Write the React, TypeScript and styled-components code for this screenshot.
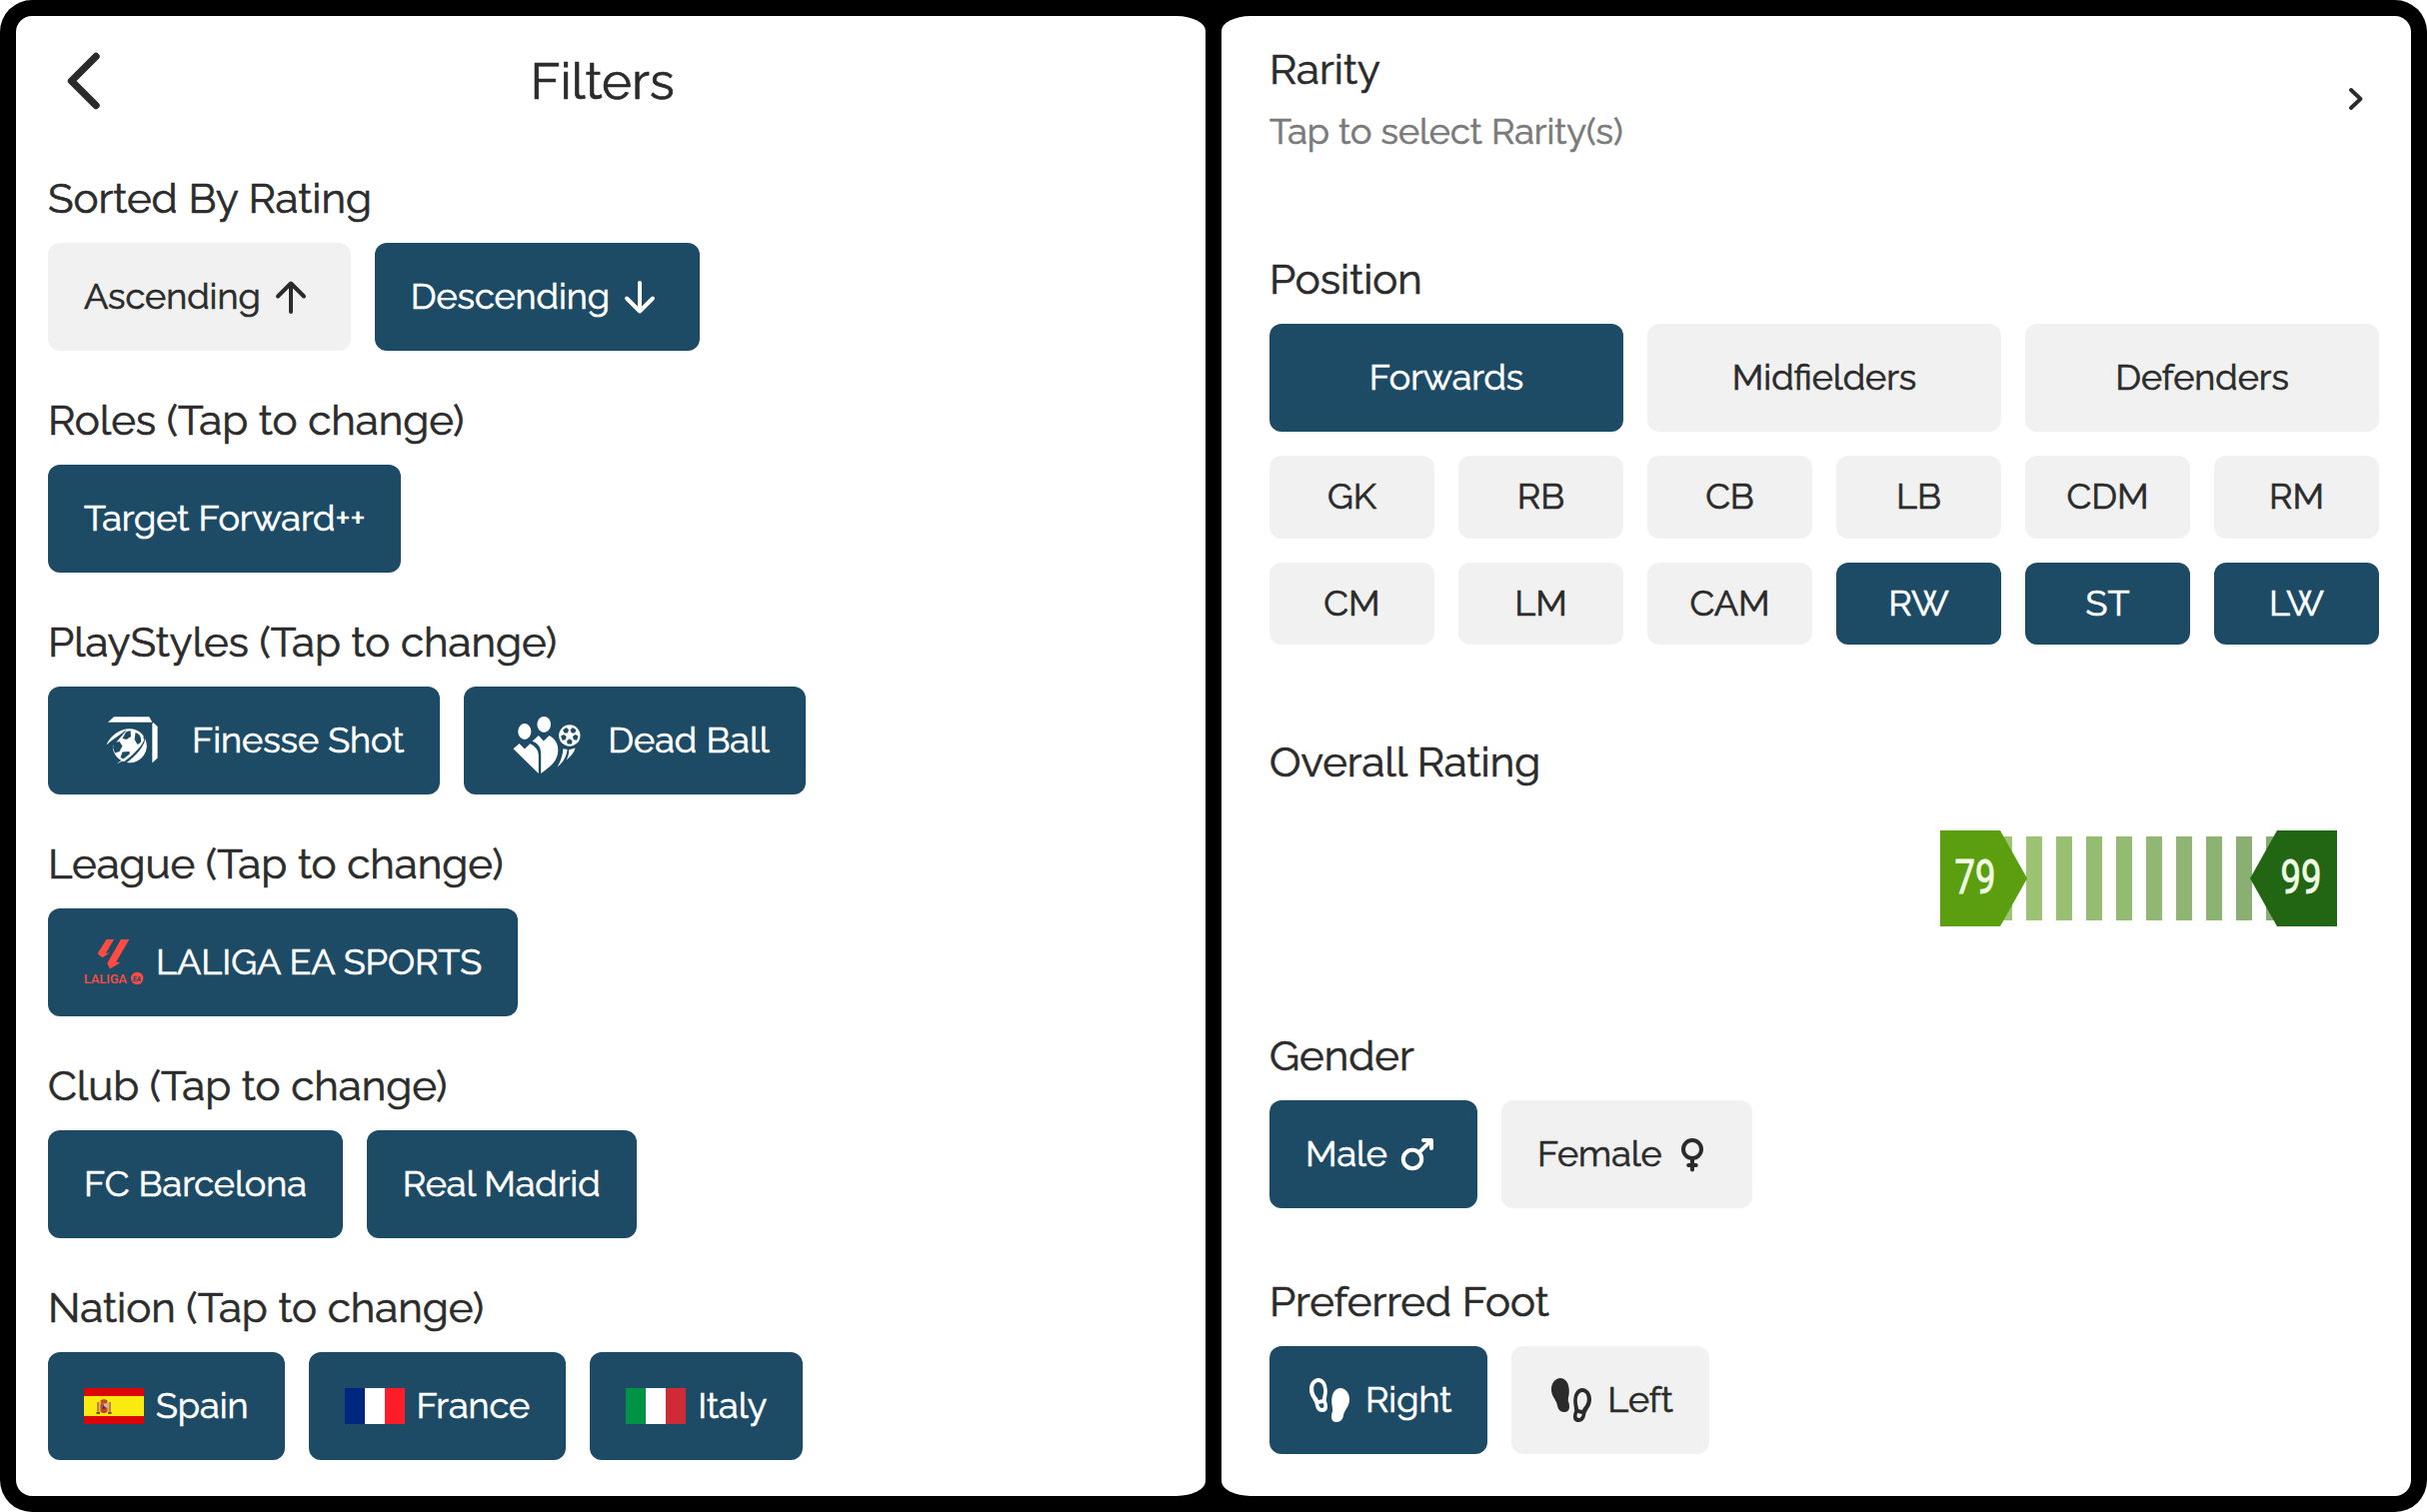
import styled, { createGlobalStyle } from 'styled-components';

const roles = ['Target Forward++'];
const clubs = ['FC Barcelona', 'Real Madrid'];
const lines = ['Forwards', 'Midfielders', 'Defenders'];
const positions = ['GK', 'RB', 'CB', 'LB', 'CDM', 'RM', 'CM', 'LM', 'CAM', 'RW', 'ST', 'LW'];
const selectedPositions = ['RW', 'ST', 'LW'];
const bars = ['#9dc573', '#9bc373', '#98c073', '#95bd72', '#93bb72', '#91b872', '#8eb572', '#8cb372', '#89b072', '#86ae71'];

export default function App(){
    return (
        <>
            <GlobalStyle />
            <Frame>
                <LeftPanel>
                    <Header>
                        <BackIcon />
                        <Title>Filters</Title>
                    </Header>
                    <Section>
                        <Label>Sorted By Rating</Label>
                        <ChipRow>
                            <Chip>Ascending <ArrowIcon /></Chip>
                            <Chip $active>Descending <ArrowIcon down /></Chip>
                        </ChipRow>
                    </Section>
                    <Section>
                        <Label>Roles (Tap to change)</Label>
                        <ChipRow>
                            {roles.map(role => <Chip key={role} $active>{role}</Chip>)}
                        </ChipRow>
                    </Section>
                    <Section>
                        <Label>PlayStyles (Tap to change)</Label>
                        <ChipRow>
                            <Chip $active $gap={12}><FinesseIcon />Finesse Shot</Chip>
                            <Chip $active $gap={12}><DeadBallIcon />Dead Ball</Chip>
                        </ChipRow>
                    </Section>
                    <Section>
                        <Label>League (Tap to change)</Label>
                        <ChipRow>
                            <Chip $active $gap={12}><LaligaLogo />LALIGA EA SPORTS</Chip>
                        </ChipRow>
                    </Section>
                    <Section>
                        <Label>Club (Tap to change)</Label>
                        <ChipRow>
                            {clubs.map(club => <Chip key={club} $active>{club}</Chip>)}
                        </ChipRow>
                    </Section>
                    <Section>
                        <Label>Nation (Tap to change)</Label>
                        <ChipRow>
                            <Chip $active $gap={12}><SpainFlag />Spain</Chip>
                            <Chip $active $gap={12}><Flag $from='#00267f' $to='#ff1c29' />France</Chip>
                            <Chip $active $gap={12}><Flag $from='#009246' $to='#ce2b37' />Italy</Chip>
                        </ChipRow>
                    </Section>
                </LeftPanel>

                <RightPanel>
                    <RarityRow>
                        <div>
                            <Label $space={16}>Rarity</Label>
                            <Hint>Tap to select Rarity(s)</Hint>
                        </div>
                        <ChevronIcon />
                    </RarityRow>
                    <Section $below={92}>
                        <Label>Position</Label>
                        <LineGrid>
                            {lines.map(line => <Chip key={line} $active={line === 'Forwards'}>{line}</Chip>)}
                        </LineGrid>
                        <PositionGrid>
                            {positions.map(p => (
                                <PositionChip key={p} $active={selectedPositions.includes(p)}>{p}</PositionChip>
                            ))}
                        </PositionGrid>
                    </Section>
                    <Section $below={104}>
                        <Label $space={44}>Overall Rating</Label>
                        <RangeSlider>
                            <Bars>
                                {bars.map(color => <Bar key={color} $color={color} />)}
                            </Bars>
                            <MinHandle><RatingValue>79</RatingValue></MinHandle>
                            <MaxHandle><RatingValue>99</RatingValue></MaxHandle>
                        </RangeSlider>
                    </Section>
                    <Section $below={68}>
                        <Label>Gender</Label>
                        <ChipRow>
                            <Chip $active>Male <MaleIcon /></Chip>
                            <Chip>Female <FemaleIcon /></Chip>
                        </ChipRow>
                    </Section>
                    <Section>
                        <Label>Preferred Foot</Label>
                        <ChipRow>
                            <Chip $active $gap={12}><FeetIcon foot='right' />Right</Chip>
                            <Chip $gap={12}><FeetIcon foot='left' />Left</Chip>
                        </ChipRow>
                    </Section>
                </RightPanel>
            </Frame>
        </>
    );
}

function BackIcon(){
    return (
        <BackSvg viewBox='0 0 34 58' fill='none' stroke='#2b2b2b' strokeWidth='7.4' strokeLinecap='round' strokeLinejoin='round'>
            <path d='M29 4.5 L4.5 29 L29 53.5' />
        </BackSvg>
    );
}

function ChevronIcon(){
    return (
        <ChevronSvg viewBox='0 0 14 22' fill='none' stroke='#2b2b2b' strokeWidth='3.8' strokeLinecap='round' strokeLinejoin='round'>
            <path d='M2 2 L11.5 11 L2 20' />
        </ChevronSvg>
    );
}

function ArrowIcon({ down }: { down?: boolean }){
    return (
        <Icon viewBox='0 0 48 48' fill='none' stroke='currentColor' strokeWidth='4' strokeLinecap='round' strokeLinejoin='round'>
            {down
                ? <path d='M24 10 V38 M11 25.5 L24 38.5 L37 25.5' />
                : <path d='M24 39 V11 M11 23.5 L24 10.5 L37 23.5' />}
        </Icon>
    );
}

function MaleIcon(){
    return (
        <Icon viewBox='0 0 48 48' fill='none' stroke='currentColor' strokeWidth='4' strokeLinecap='round' strokeLinejoin='round'>
            <circle cx='19' cy='29' r='9.2' />
            <path d='M25.8 22.2 L37.5 10.5 M30 10 H38 V18' />
        </Icon>
    );
}

function FemaleIcon(){
    return (
        <Icon viewBox='0 0 48 48' fill='none' stroke='currentColor' strokeWidth='4' strokeLinecap='round'>
            <circle cx='24' cy='19' r='9' />
            <path d='M24 28 V39.5 M20.2 35 H27.8' />
        </Icon>
    );
}

function FeetIcon({ foot }: { foot: 'left' | 'right' }){
    const sole = 'M9 0 C14 0 17.8 5 17.8 13 C17.8 17.5 16.6 20 16.8 23 C18 25.5 18 27.5 18 29 C18 32 16 34 12.8 34 C8.5 34 6.6 31 6 27.5 C5.4 23.5 3.4 21.5 1.8 18.5 C.6 16.4 0 14 0 11 C0 5 4 0 9 0Z';
    const holes = 'M9 4 C12 4 14.2 8 14.2 12.5 C14.2 16.5 13 19 12.8 21.2 L9 22 C8 19 4.2 17 4.2 11 C4.2 7 6 4 9 4Z M9.2 26 L13.6 25 C15 27 14.6 30 12.6 30 C10.4 30 9.8 28 9.2 26Z';
    return (
        <Icon viewBox='0 0 48 48' fill='currentColor' fillRule='evenodd'>
            <path transform='translate(4 2)' d={foot === 'left' ? sole : sole + holes} />
            <path transform='translate(44 12) scale(-1 1)' d={foot === 'right' ? sole : sole + holes} />
        </Icon>
    );
}

function FinesseIcon(){
    return (
        <PlayStyleSvg viewBox='0 0 96 96' fill='#fff'>
            <path d='M24 29.8 L30 24.3 H65.3 L68.4 29.8Z' />
            <path d='M69.3 30 L73.6 34 V65.5 L68.3 70.4 V31.5Z' />
            <circle cx='45.7' cy='53.3' r='17' />
            <path fill='#1d4b65' d='M26 34 H42.5 L41.5 39 L27 56 Z' />
            <path d='M22.5 52.5 C25 46 32 38 42.8 36.2 C39 41 32 44 22.5 52.5Z' />
            <g fill='#1d4b65'>
                <path d='M42 39.5 L46.5 38 L47 44 L42.5 47 L38.5 46Z' />
                <path d='M51.5 40 C56 41.5 57.5 44.5 57 50 L53.5 52 L50.6 47Z' />
                <path d='M30.5 50 L35.5 49 L38.5 53.5 L35.5 59 L31 60.5 L29 55Z' />
                <path d='M38.5 59.5 L45.5 59 L46 63.5 L40.5 67 L36.5 65Z' />
                <path d='M62 44 C60.5 54 52 64 40 72 L36.5 71.5 C48 64.5 57 55 60 43Z' />
            </g>
            <path d='M60.5 47 C57 56 46 65.5 33 71.2 C46 61.5 56 54 59 45Z' />
            <path d='M62.6 52 C62.5 62 56 69.5 45.5 70.3 C53 65.5 59 60 62.6 52Z' />
        </PlayStyleSvg>
    );
}

function DeadBallIcon(){
    const spots = [0, 72, 144, 216, 288];
    return (
        <PlayStyleSvg viewBox='0 0 96 96' fill='#fff'>
            <ellipse cx='24.8' cy='39' rx='6.6' ry='7.9' />
            <ellipse cx='44.2' cy='31.9' rx='6.8' ry='8' />
            <path d='M13.5 56.3 L19.5 51 L24.8 56.5 L30.2 51.2 C36 54 38.8 58 38.8 63 V81 Z' />
            <path d='M32.5 48.8 L38.8 43 L43.8 48.5 L49.5 43 C56 47 58.4 52 58.3 58 C58 68 52 73 41.2 81 V62 C41.2 54 38 51 32.5 48.8Z' />
            <circle cx='69.8' cy='43' r='10.7' />
            <g fill='#1d4b65' transform='translate(69.8 43)'>
                {spots.map(a => (
                    <path key={a} transform={`rotate(${a + 36})`} d='M0 -3.2 L2.7 -5.2 L2.2 -8.4 H-2.2 L-2.7 -5.2Z' />
                ))}
            </g>
            <path d='M63.4 56.2 L67.6 57 C67 64 63 70 57.6 74.6 C61 68 63 63 63.4 56.2Z' />
            <path d='M69.2 57.2 L75.6 55.6 C74 60.5 71 64 66.6 67.4 C68.4 64 69.2 61 69.2 57.2Z' />
        </PlayStyleSvg>
    );
}

function LaligaLogo(){
    return (
        <LogoSvg viewBox='0 0 60 60' fill='#ff4b44'>
            <path d='M22.5 7 H30 L21.8 21 L26 20.2 L18.6 25.2 L13.8 21.4 L14.6 19.4 Z' />
            <path d='M37 7 H45.4 L32.2 29.5 L36.2 30.6 L26 36.6 L23.2 31 Z' />
            <LogoText x='0' y='50.6' textLength='43' lengthAdjust='spacingAndGlyphs'>LALIGA</LogoText>
            <circle cx='53.2' cy='46' r='6.2' />
            <BadgeText x='53' y='48.6' textAnchor='middle'>EA</BadgeText>
        </LogoSvg>
    );
}

function SpainFlag(){
    return (
        <FlagSvg viewBox='0 0 60 36'>
            <rect width='60' height='36' fill='#dd0408' />
            <rect y='8' width='60' height='20' fill='#fbea10' />
            <path d='M13 14 H15.4 V25 H13Z M24.6 14 H27 V25 H24.6Z' fill='#b9825c' />
            <path d='M12.4 24 H16 V26 H12.4Z M24 24 H27.6 V26 H24Z' fill='#7a5330' />
            <path d='M16.4 13 C17 10.8 23 10.8 23.6 13 L22.8 15.4 H17.2Z' fill='#bd4a30' />
            <path d='M16.4 15.6 H23.6 V22.4 C23.6 26 16.4 26 16.4 22.4Z' fill='#c8402f' />
            <path d='M20 15.6 H23.6 V19.6 H20Z' fill='#d9b5b0' />
            <circle cx='20' cy='19.6' r='1.5' fill='#2c3b7c' />
        </FlagSvg>
    );
}

const GlobalStyle = createGlobalStyle`
    body {
        margin: 0;
        background: #fff;
        font-family: Raleway, Lato, sans-serif;
        color: #2b2b2b;
        -webkit-text-stroke: 0.7px currentColor;
    }

    * {
        box-sizing: border-box;
    }
`;

const Frame = styled.div`
    display: flex;
    gap: 16px;
    width: 2428px;
    height: 1513px;
    padding: 16px;
    background: #000;
    border-radius: 32px;
`;

const Panel = styled.main`
    display: flex;
    flex-direction: column;
    width: 1190px;
    height: 1481px;
    background: #fff;
`;

const LeftPanel = styled(Panel)`
    padding: 34px 32px 0;
    border-radius: 16px 29px 29px 16px / 16px 15px 15px 16px;
`;

const RightPanel = styled(Panel)`
    padding: 28px 32px 0 48px;
    border-radius: 29px 16px 16px 29px / 15px 16px 16px 15px;
`;

const Header = styled.header`
    display: grid;
    grid-template-columns: 1fr auto 1fr;
    flex-shrink: 0;
    align-items: center;
    height: 61px;
    margin-bottom: 62px;
    padding: 0 14px 0 19px;
`;

const Title = styled.h1`
    margin: 0 22px 0 0;
    font-size: 51px;
    font-weight: 400;
    line-height: 60px;
`;

const Section = styled.section<{ $below?: number }>`
    margin-bottom: ${props => props.$below ?? 44}px;
`;

const Label = styled.h2<{ $space?: number }>`
    margin: 0 0 ${props => props.$space ?? 20}px;
    padding-top: 1px;
    font-size: 42px;
    font-weight: 400;
    line-height: 49px;
`;

const Hint = styled.p`
    margin: 0;
    font-size: 36px;
    line-height: 42px;
    color: #7a7a7a;
`;

const RarityRow = styled.div`
    display: flex;
    align-items: center;
    justify-content: space-between;
    height: 108px;
    margin-bottom: 102px;
    padding-right: 16px;
`;

const ChipRow = styled.div`
    display: flex;
    gap: 24px;
`;

const Chip = styled.button<{ $active?: boolean; $gap?: number }>`
    display: flex;
    align-items: center;
    justify-content: center;
    gap: ${props => props.$gap ?? 6}px;
    height: 108px;
    padding: 0 36px 2px;
    border: none;
    border-radius: 12px;
    background: ${props => props.$active ? '#1d4b65' : '#f1f1f1'};
    color: ${props => props.$active ? '#fff' : '#2b2b2b'};
    font: inherit;
    font-size: 36px;
    white-space: nowrap;

    > * {
        margin-top: 2px;
    }
`;

const PositionChip = styled(Chip)`
    height: 82.5px;
    padding: 0 0 2px;
`;

const LineGrid = styled.div`
    display: grid;
    grid-template-columns: repeat(3, 1fr);
    gap: 24px;
    margin-bottom: 24px;
`;

const PositionGrid = styled.div`
    display: grid;
    grid-template-columns: repeat(6, 1fr);
    gap: 24px;
`;

const RangeSlider = styled.div`
    position: relative;
    display: flex;
    justify-content: space-between;
    width: 397px;
    height: 96px;
    margin-left: 671px;
`;

// the bars run behind both handles
const Bars = styled.div`
    position: absolute;
    top: 6px;
    left: 56.3px;
    display: flex;
    gap: 14.5px;
`;

const Bar = styled.span<{ $color: string }>`
    width: 15.5px;
    height: 84px;
    background: ${props => props.$color};
`;

const Handle = styled.div`
    position: relative;
    display: flex;
    align-items: center;
    width: 87px;
    height: 96px;
    color: #f0fde4;
`;

const MinHandle = styled(Handle)`
    padding-left: 8px;
    background: #5b9e10;
    clip-path: polygon(0 0, 69% 0, 100% 50%, 69% 100%, 0 100%);
`;

const MaxHandle = styled(Handle)`
    justify-content: flex-end;
    padding-right: 9px;
    background: #226614;
    clip-path: polygon(31% 0, 100% 0, 100% 100%, 31% 100%, 0 50%);
`;

const RatingValue = styled.span`
    width: 54px;
    text-align: center;
    font-family: Roboto, sans-serif;
    font-size: 48px;
    line-height: 92px;
    margin-bottom: 2px;
    -webkit-text-stroke: 0.9px currentColor;
    transform: scaleX(0.76);
`;

const BackSvg = styled.svg`
    width: 34px;
    height: 58px;
`;

const ChevronSvg = styled.svg`
    width: 14px;
    height: 22px;
    margin-top: 2px;
`;

const Icon = styled.svg`
    width: 48px;
    height: 48px;
`;

const PlayStyleSvg = styled.svg`
    width: 96px;
    height: 96px;
`;

const LogoSvg = styled.svg`
    width: 60px;
    height: 60px;
`;

const LogoText = styled.text`
    font-family: Roboto, sans-serif;
    font-size: 13.5px;
    font-weight: 500;
    -webkit-text-stroke: 0;
`;

const BadgeText = styled.text`
    font-family: Roboto, sans-serif;
    font-size: 7px;
    font-style: italic;
    font-weight: 700;
    fill: #1d4b65;
    -webkit-text-stroke: 0;
`;

const FlagSvg = styled.svg`
    width: 60px;
    height: 36px;
`;

const Flag = styled.span<{ $from: string; $to: string }>`
    width: 60px;
    height: 36px;
    background: linear-gradient(
        to right,
        ${props => props.$from} 33.3%,
        #fff 33.3% 66.7%,
        ${props => props.$to} 66.7%
    );
`;
